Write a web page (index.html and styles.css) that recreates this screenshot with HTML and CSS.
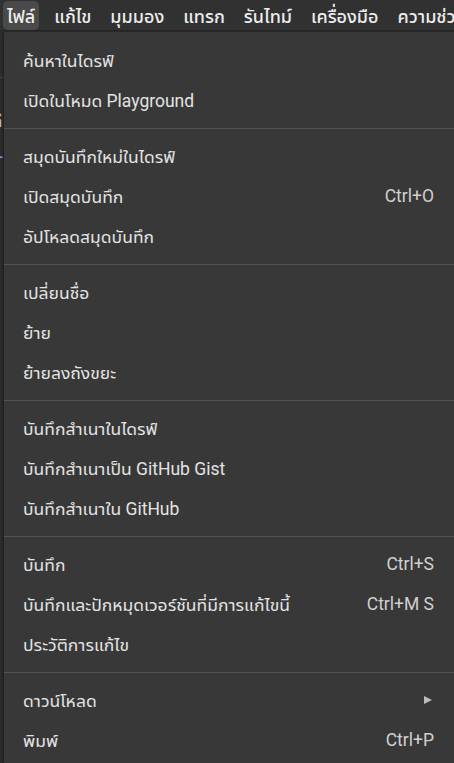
FILE: index.html
```html
<!DOCTYPE html>
<html lang="th">
<head>
<meta charset="utf-8">
<link rel="stylesheet" href="styles.css">
</head>
<body>
<nav class="menubar">
  <span class="top-item active">ไฟล์</span>
  <span class="top-item">แก้ไข</span>
  <span class="top-item">มุมมอง</span>
  <span class="top-item">แทรก</span>
  <span class="top-item">รันไทม์</span>
  <span class="top-item">เครื่องมือ</span>
  <span class="top-item">ความช่วยเหลือ</span>
</nav>
<main class="page">
  <div class="page-line"></div>
  <div class="page-frag">ดี</div>
  <div class="page-plus">+</div>
</main>
<div class="menu">
  <div class="item"><span>ค้นหาในไดรฟ์</span></div>
  <div class="item"><span>เปิดในโหมด Playground</span></div>
  <div class="sep"></div>
  <div class="item"><span>สมุดบันทึกใหม่ในไดรฟ์</span></div>
  <div class="item"><span>เปิดสมุดบันทึก</span><span class="key">Ctrl+O</span></div>
  <div class="item"><span>อัปโหลดสมุดบันทึก</span></div>
  <div class="sep"></div>
  <div class="item"><span>เปลี่ยนชื่อ</span></div>
  <div class="item"><span>ย้าย</span></div>
  <div class="item"><span>ย้ายลงถังขยะ</span></div>
  <div class="sep"></div>
  <div class="item"><span>บันทึกสำเนาในไดรฟ์</span></div>
  <div class="item"><span>บันทึกสำเนาเป็น GitHub Gist</span></div>
  <div class="item"><span>บันทึกสำเนาใน GitHub</span></div>
  <div class="sep"></div>
  <div class="item"><span>บันทึก</span><span class="key">Ctrl+S</span></div>
  <div class="item"><span>บันทึกและปักหมุดเวอร์ชันที่มีการแก้ไขนี้</span><span class="key">Ctrl+M S</span></div>
  <div class="item"><span>ประวัติการแก้ไข</span></div>
  <div class="sep"></div>
  <div class="item"><span>ดาวน์โหลด</span><span class="arrow"></span></div>
  <div class="item"><span>พิมพ์</span><span class="key">Ctrl+P</span></div>
</div>
</body>
</html>
```
FILE: styles.css
```css
html, body {
  margin: 0;
  padding: 0;
  height: 100%;
  overflow: hidden;
  background: #2c2c2c;
  font-family: "Google Sans", Roboto, "Noto Sans Thai UI", "Noto Sans Thai", "Noto Sans", sans-serif;
  color: #e3e3e3;
}
.menubar {
  height: 31px;
  background: #313131;
  border-bottom: 1px solid #262626;
  display: flex;
  align-items: stretch;
  gap: 11px;
  padding: 1px 0 0 3px;
  box-sizing: border-box;
  white-space: nowrap;
  overflow: hidden;
}
.top-item {
  display: flex;
  align-items: center;
  padding: 0 4px;
  font-size: 18px;
  font-weight: 500;
  color: #ececec;
  border-radius: 5px;
  height: 29px;
}
.top-item.active {
  background: #4a4a4a;
}
.page {
  position: relative;
  height: 700px;
  padding-top: 46px;
}
.page-line {
  height: 1px;
  background: #3e3e3e;
}
.page-frag {
  position: absolute;
  left: -8px;
  top: 78px;
  font-size: 17px;
  color: #bbb;
}
.page-plus {
  position: absolute;
  left: -7px;
  top: 116px;
  font-size: 18px;
  color: #6ea6f5;
}
.menu {
  position: absolute;
  left: 4px;
  right: 0;
  top: 32px;
  bottom: 0;
  background: #383838;
  padding: 8px 0;
  box-shadow: -1px 0 2px rgba(0,0,0,0.35);
}
.item {
  height: 40px;
  display: flex;
  align-items: center;
  justify-content: space-between;
  padding: 0 20px 0 19px;
  font-size: 17.5px;
  font-weight: 400;
  color: #e3e3e3;
  white-space: nowrap;
}
.key {
  color: #d0d0d0;
}
.arrow {
  width: 0;
  height: 0;
  border-left: 8px solid #bdbdbd;
  border-top: 4px solid transparent;
  border-bottom: 4px solid transparent;
  margin-right: 2px;
}
.sep {
  height: 16px;
  display: flex;
  align-items: center;
}
.sep::before {
  content: "";
  flex: 1;
  height: 1px;
  background: #535353;
}
```
